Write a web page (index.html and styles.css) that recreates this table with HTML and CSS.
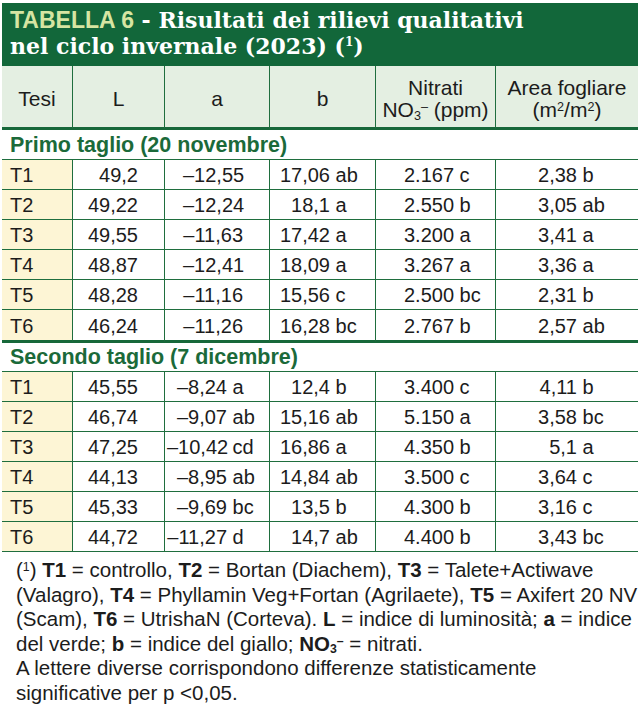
FILE: index.html
```html
<!DOCTYPE html>
<html lang="it">
<head>
<meta charset="utf-8">
<title>Tabella 6</title>
<link rel="stylesheet" href="styles.css">
</head>
<body>
<div class="sheet">
  <h1 class="title"><span class="tag">TABELLA 6</span> - Risultati dei rilievi qualitativi<br>nel ciclo invernale (2023) (<sup>1</sup>)</h1>
  <table class="data">
    <colgroup>
      <col class="w-t"><col class="w-l"><col class="w-a"><col class="w-b"><col class="w-n"><col class="w-f">
    </colgroup>
    <thead>
      <tr><th>Tesi</th><th>L</th><th>a</th><th>b</th><th>Nitrati<br>NO<sub>3</sub><sup>–</sup> (ppm)</th><th>Area fogliare<br>(m<sup>2</sup>/m<sup>2</sup>)</th></tr>
    </thead>
    <tbody class="sec1">
      <tr class="sect"><td colspan="6">Primo taglio (20 novembre)</td></tr>
      <tr><td class="c-t">T1</td><td class="c-l">49,2</td><td class="c-a"><span class="n">–12,55</span></td><td class="c-b"><span class="n">17,06</span> ab</td><td class="c-n"><span class="n">2.167</span> c</td><td class="c-f"><span class="n">2,38</span> b</td></tr>
      <tr><td class="c-t">T2</td><td class="c-l">49,22</td><td class="c-a"><span class="n">–12,24</span></td><td class="c-b"><span class="n">18,1</span> a</td><td class="c-n"><span class="n">2.550</span> b</td><td class="c-f"><span class="n">3,05</span> ab</td></tr>
      <tr><td class="c-t">T3</td><td class="c-l">49,55</td><td class="c-a"><span class="n">–11,63</span></td><td class="c-b"><span class="n">17,42</span> a</td><td class="c-n"><span class="n">3.200</span> a</td><td class="c-f"><span class="n">3,41</span> a</td></tr>
      <tr><td class="c-t">T4</td><td class="c-l">48,87</td><td class="c-a"><span class="n">–12,41</span></td><td class="c-b"><span class="n">18,09</span> a</td><td class="c-n"><span class="n">3.267</span> a</td><td class="c-f"><span class="n">3,36</span> a</td></tr>
      <tr><td class="c-t">T5</td><td class="c-l">48,28</td><td class="c-a"><span class="n">–11,16</span></td><td class="c-b"><span class="n">15,56</span> c</td><td class="c-n"><span class="n">2.500</span> bc</td><td class="c-f"><span class="n">2,31</span> b</td></tr>
      <tr><td class="c-t">T6</td><td class="c-l">46,24</td><td class="c-a"><span class="n">–11,26</span></td><td class="c-b"><span class="n">16,28</span> bc</td><td class="c-n"><span class="n">2.767</span> b</td><td class="c-f"><span class="n">2,57</span> ab</td></tr>
    </tbody>
    <tbody class="sec2">
      <tr class="sect"><td colspan="6">Secondo taglio (7 dicembre)</td></tr>
      <tr><td class="c-t">T1</td><td class="c-l">45,55</td><td class="c-a"><span class="n">–8,24</span> a</td><td class="c-b"><span class="n">12,4</span> b</td><td class="c-n"><span class="n">3.400</span> c</td><td class="c-f"><span class="n">4,11</span> b</td></tr>
      <tr><td class="c-t">T2</td><td class="c-l">46,74</td><td class="c-a"><span class="n">–9,07</span> ab</td><td class="c-b"><span class="n">15,16</span> ab</td><td class="c-n"><span class="n">5.150</span> a</td><td class="c-f"><span class="n">3,58</span> bc</td></tr>
      <tr><td class="c-t">T3</td><td class="c-l">47,25</td><td class="c-a"><span class="n">–10,42</span> cd</td><td class="c-b"><span class="n">16,86</span> a</td><td class="c-n"><span class="n">4.350</span> b</td><td class="c-f"><span class="n">5,1</span> a</td></tr>
      <tr><td class="c-t">T4</td><td class="c-l">44,13</td><td class="c-a"><span class="n">–8,95</span> ab</td><td class="c-b"><span class="n">14,84</span> ab</td><td class="c-n"><span class="n">3.500</span> c</td><td class="c-f"><span class="n">3,64</span> c</td></tr>
      <tr><td class="c-t">T5</td><td class="c-l">45,33</td><td class="c-a"><span class="n">–9,69</span> bc</td><td class="c-b"><span class="n">13,5</span> b</td><td class="c-n"><span class="n">4.300</span> b</td><td class="c-f"><span class="n">3,16</span> c</td></tr>
      <tr><td class="c-t">T6</td><td class="c-l">44,72</td><td class="c-a"><span class="n">–11,27</span> d</td><td class="c-b"><span class="n">14,7</span> ab</td><td class="c-n"><span class="n">4.400</span> b</td><td class="c-f"><span class="n">3,43</span> bc</td></tr>
    </tbody>
  </table>
  <p class="note">(<sup>1</sup>) <b>T1</b> = controllo, <b>T2</b> = Bortan (Diachem), <b>T3</b> = Talete+Actiwave<br>(Valagro), <b>T4</b> = Phyllamin Veg+Fortan (Agrilaete), <b>T5</b> = Axifert 20 NV<br>(Scam), <b>T6</b> = UtrishaN (Corteva). <b>L</b> = indice di luminosità; <b>a</b> = indice<br>del verde; <b>b</b> = indice del giallo; <b>NO<sub>3</sub><sup>–</sup></b> = nitrati.<br>A lettere diverse corrispondono differenze statisticamente<br>significative per p &lt;0,05.</p>
</div>
</body>
</html>
```
FILE: styles.css
```css
* { box-sizing: border-box; }

body {
  margin: 0;
  background: #ffffff;
  font-family: "Liberation Sans", Arial, sans-serif;
  color: #1c1c1c;
}

.sheet {
  width: 636px;
  margin: 3px 0 0 2px;
}

.title {
  margin: 0;
  height: 63px;
  padding: 4px 8px 6px;
  background: #12673a;
  color: #ffffff;
  font: bold 22px/26px "DejaVu Serif", "Liberation Serif", serif;
}

.title .tag {
  font-family: "Liberation Sans", Arial, sans-serif;
  font-size: 23px;
  color: #d6e5a2;
}

.title sup {
  font-size: 12px;
  line-height: 0;
  vertical-align: 8px;
}

.data {
  width: 636px;
  table-layout: fixed;
  border-collapse: separate;
  border-spacing: 0;
}

.w-t { width: 70px; }
.w-l { width: 92px; }
.w-a { width: 105px; }
.w-b { width: 106px; }
.w-n { width: 120px; }
.w-f { width: 143px; }

.data th {
  height: 64px;
  padding: 5px 0 0;
  background: #e4efe2;
  border-left: 1px solid #1f6e3e;
  border-bottom: 3px solid #17683a;
  font-size: 21px;
  line-height: 22px;
  font-weight: normal;
  text-align: center;
  vertical-align: middle;
}

.data th:first-child { border-left: 0; }

.data sub, .data sup, .note sub, .note sup {
  font-size: 0.6em;
  line-height: 0;
}
.data sub, .note sub { vertical-align: -0.2em; }
.data sup, .note sup { vertical-align: 0.5em; }

.data td {
  height: 30px;
  padding: 0 0 4px;
  border-left: 1px solid #1f6e3e;
  border-bottom: 1px solid #1f6e3e;
  font-size: 20px;
  line-height: 20px;
  vertical-align: bottom;
  white-space: nowrap;
}

.data td:first-child { border-left: 0; }

.data .sect td {
  height: 30px;
  padding: 0 0 4px 8px;
  color: #1b6a3a;
  font-size: 21.5px;
  font-weight: bold;
}

.sec2 .sect td { height: 29px; }

.sec1 tr:last-child td {
  height: 33px;
  border-bottom: 3px solid #17683a;
}

.c-t {
  padding-left: 8px !important;
  background: #fdf5d5;
}

.c-l {
  text-align: right;
  padding-right: 26px !important;
}

.n {
  display: inline-block;
  text-align: right;
}

.c-a .n { width: 60px; }
.sec1 .c-a { padding-left: 18px !important; }
.sec2 .c-a { padding-left: 2px !important; }

.c-b { padding-left: 8px !important; }
.c-b .n { width: 52px; }

.c-n { padding-left: 28px !important; }
.c-n .n { width: 50px; }

.c-f { padding-left: 42px !important; }
.c-f .n { width: 39px; }

.note {
  margin: 6px 0 0;
  padding-left: 14px;
  font-size: 20.5px;
  line-height: 24.6px;
  white-space: nowrap;
}
```
